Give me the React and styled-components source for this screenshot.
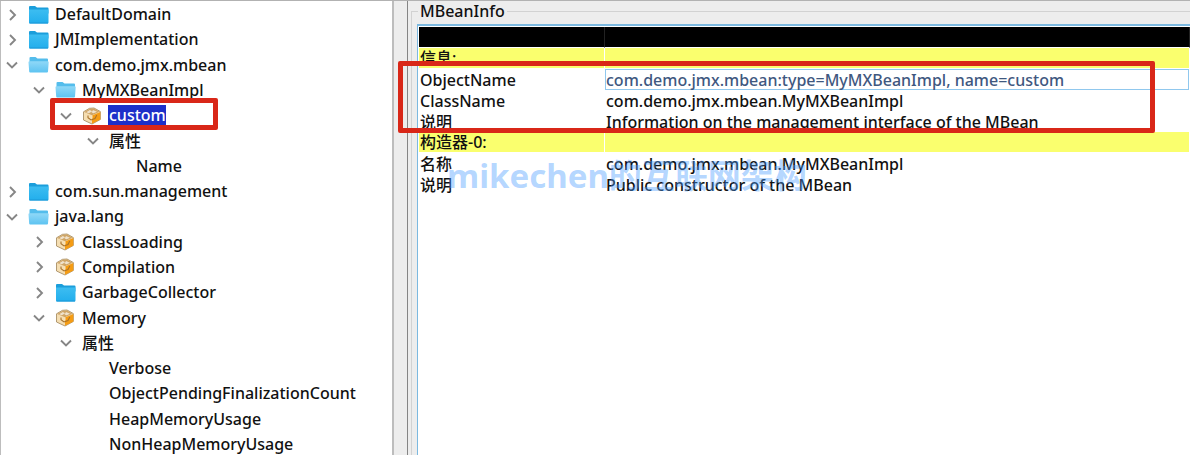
import React from "react";
import styled, { createGlobalStyle } from "styled-components";

const Global = createGlobalStyle`
  * { box-sizing: border-box; }
  body {
    margin: 0;
    background: #fff;
    color: #111;
    font: 500 16px/20px "Noto Sans", "Noto Sans CJK SC", sans-serif;
  }
`;

const Window = styled.main`
  display: flex;
  min-height: calc(100vh - 5px);
  max-height: calc(100vh - 5px);
  overflow: hidden;
  background: #ededed;
  border-top: 1px solid #b2b2b2;
`;

const TreePane = styled.nav`
  flex: 0 0 33%;
  min-width: 394px;
  display: flex;
  border: solid #bdbdbd;
  border-width: 0 2px 0 1px;
  background: #fff;
`;

const Tree = styled.ul`
  flex: 1;
  display: flex;
  flex-direction: column;
  margin: 1px 0 -2px;
  padding: 0;
  list-style: none;
`;

const TreeRow = styled.li`
  position: relative;
  flex: 1 0 25px;
  display: flex;
  align-items: center;
  padding-left: ${(p) => p.$depth * 27}px;
  white-space: nowrap;
`;

const Toggle = styled.button`
  flex: none;
  display: flex;
  justify-content: center;
  width: 22px;
  margin-right: 5px;
  padding: 0;
  border: 0;
  background: none;
`;

const Spacer = styled.span`
  width: 27px;
`;

const IconBox = styled.span`
  display: flex;
  width: 27px;
`;

const Label = styled.span`
  line-height: 21px;
  color: ${(p) => (p.$selected ? "#fff" : "inherit")};
  background: ${(p) => (p.$selected ? "#1d2fc9" : "none")};
  box-shadow: ${(p) => (p.$selected ? "-1px 0 #1d2fc9" : "none")};
`;

const Highlight = styled.span`
  position: absolute;
  border: 5px solid #d92718;
  border-radius: 2px;
  pointer-events: none;
`;

const NodeHighlight = styled(Highlight)`
  left: 49px;
  top: -5px;
  width: 168px;
  height: 32px;
`;

const InfoHighlight = styled(Highlight)`
  left: -20px;
  top: 35px;
  width: 757px;
  height: 72px;
`;

const Splitter = styled.div`
  flex: 0 0 14px;
  border-right: 1px solid #858585;
`;

const InfoPane = styled.section`
  flex: 1;
  display: flex;
  min-width: 0;
  padding: 1px 0 0 3px;
`;

const Group = styled.fieldset`
  flex: 1;
  display: flex;
  min-width: 0;
  margin: 0;
  padding: 4px 0 0 5px;
  border: solid #d2d2d2;
  border-width: 1px 0 0 1px;
`;

const Legend = styled.legend`
  margin-left: 1px;
  padding: 0 2px;
  line-height: 18px;
`;

const TableFrame = styled.div`
  position: relative;
  flex: 1;
  min-width: 0;
  padding: 1px 0 0 1px;
  border: solid #7cb9e0;
  border-width: 2px 0 0 1px;
  background: #fff;
`;

const InfoTable = styled.table`
  width: 100%;
  border-spacing: 0;
  table-layout: fixed;
`;

const KeyColumn = styled.col`
  width: 186px;
`;

const HeadCell = styled.th`
  height: 21px;
  padding: 0;
  background: #000;
  border-right: 1px solid #222;
  border-bottom: 1px solid #fff;
`;

const Cell = styled.td`
  height: 21px;
  padding: 0 1px;
  overflow: hidden;
  white-space: nowrap;
  line-height: 20px;
  background: ${(p) => (p.$section ? "#faff6e" : "none")};
  border-right: 1px solid #fff;
  border-bottom: ${(p) => (p.$section ? "1px solid #fff" : "0")};
  color: ${(p) => (p.$active ? "#3f587f" : "inherit")};
  box-shadow: ${(p) => (p.$active ? "inset 0 0 0 1px #90c8ee" : "none")};
`;

const Watermark = styled.span`
  position: absolute;
  left: 29px;
  top: 130px;
  font: bold 33px/40px "Noto Sans", "Noto Sans CJK SC", sans-serif;
  white-space: nowrap;
  color: rgba(76, 158, 255, 0.42);
  pointer-events: none;
`;

function Chevron({ open }) {
  return (
    <svg width="12" height="12" viewBox="0 0 12 12" fill="none" stroke="#868686" strokeWidth="1.9">
      <path d={open ? "M1 3.5 6 8.5 11 3.5" : "M4 1 9 6 4 11"} />
    </svg>
  );
}

function Folder({ open }) {
  return (
    <svg width="21" height="20" viewBox="0 0 21 20">
      <defs>
        <linearGradient id="closedFolder" x2="0" y2="1">
          <stop stopColor="#3dbdf1" />
          <stop offset="1" stopColor="#22aeec" />
        </linearGradient>
        <linearGradient id="openFolder" x2="0" y2="1">
          <stop stopColor="#90d8f7" />
          <stop offset="1" stopColor="#5dc3f1" />
        </linearGradient>
      </defs>
      {open ? (
        <>
          <path d="M1.500 3q0-1 1-1h5l2 1.500h9.500q1 0 1 1v5H1.500z" fill="#54bdec" />
          <path d="M.5 7.200q0-1 1-1h18.200q1 0 1 1l-.7 9.300q0 1-1 1H2.200q-1 0-1-1z" fill="url(#openFolder)" />
        </>
      ) : (
        <>
          <path d="M1 2q0-1 1-1h5l2 1.500h10.500q1 0 1 1v5H1z" fill="#1b9edb" />
          <path d="M1 4.500h19.500v13q0 1-1 1H2q-1 0-1-1z" fill="url(#closedFolder)" />
          <path d="M1.500 18h18.500" stroke="#1a96d6" />
        </>
      )}
    </svg>
  );
}

function Bean() {
  return (
    <svg width="20" height="18" viewBox="0 0 20 18">
      <path d="M1.500 4.800 7.500 1.300 12 1l6.300 3.500v8L10 17 1.500 13z" fill="#f5deb2" stroke="#a08458" strokeWidth=".8" />
      <path d="M10 8.500 18.300 5v7.500L10 16.800z" fill="#f59c14" />
      <path d="M2.200 5 7.500 2l4.500-.4L17.500 4.800 10 8.200z" fill="#cfa566" />
      <path d="M4.200 5.200 7.800 3l2.400 1.200-3.300 2zM11 3l4 1.800-3.400 1.500-2-.9z" fill="#efe2cc" />
      <path d="M6 8.500v2.200l3 2.300 4-1.500 1.800-3.500" fill="none" stroke="#a8732c" strokeWidth="1.100" />
      <path d="M10 8.500v3" stroke="#fbe7bd" />
    </svg>
  );
}

const nodes = [
  { label: "DefaultDomain", depth: 0, icon: "folder", open: false },
  { label: "JMImplementation", depth: 0, icon: "folder", open: false },
  { label: "com.demo.jmx.mbean", depth: 0, icon: "folder", open: true },
  { label: "MyMXBeanImpl", depth: 1, icon: "folder", open: true },
  { label: "custom", depth: 2, icon: "bean", open: true, selected: true },
  { label: "属性", depth: 3, open: true },
  { label: "Name", depth: 4 },
  { label: "com.sun.management", depth: 0, icon: "folder", open: false },
  { label: "java.lang", depth: 0, icon: "folder", open: true },
  { label: "ClassLoading", depth: 1, icon: "bean", open: false },
  { label: "Compilation", depth: 1, icon: "bean", open: false },
  { label: "GarbageCollector", depth: 1, icon: "folder", open: false },
  { label: "Memory", depth: 1, icon: "bean", open: true },
  { label: "属性", depth: 2, open: true },
  { label: "Verbose", depth: 3 },
  { label: "ObjectPendingFinalizationCount", depth: 3 },
  { label: "HeapMemoryUsage", depth: 3 },
  { label: "NonHeapMemoryUsage", depth: 3 },
];

const rows = [
  { name: "信息:", section: true },
  { name: "ObjectName", value: "com.demo.jmx.mbean:type=MyMXBeanImpl, name=custom", active: true },
  { name: "ClassName", value: "com.demo.jmx.mbean.MyMXBeanImpl" },
  { name: "说明", value: "Information on the management interface of the MBean" },
  { name: "构造器-0:", section: true },
  { name: "名称", value: "com.demo.jmx.mbean.MyMXBeanImpl" },
  { name: "说明", value: "Public constructor of the MBean" },
];

function Node({ label, depth, icon, open, selected }) {
  return (
    <TreeRow $depth={depth}>
      {open === undefined ? (
        <Spacer />
      ) : (
        <Toggle type="button" aria-label={label} aria-expanded={open}>
          <Chevron open={open} />
        </Toggle>
      )}
      {icon && <IconBox>{icon === "folder" ? <Folder open={open} /> : <Bean />}</IconBox>}
      <Label $selected={selected}>{label}</Label>
      {selected && <NodeHighlight />}
    </TreeRow>
  );
}

export default function App() {
  return (
    <>
      <Global />
      <Window>
        <TreePane>
          <Tree>
            {nodes.map((node, i) => (
              <Node key={i} {...node} />
            ))}
          </Tree>
        </TreePane>
        <Splitter />
        <InfoPane>
          <Group>
            <Legend>MBeanInfo</Legend>
            <TableFrame>
              <InfoTable>
                <colgroup>
                  <KeyColumn />
                  <col />
                </colgroup>
                <thead>
                  <tr>
                    <HeadCell />
                    <HeadCell />
                  </tr>
                </thead>
                <tbody>
                  {rows.map((row, i) => (
                    <tr key={i}>
                      <Cell $section={row.section}>{row.name}</Cell>
                      <Cell $section={row.section} $active={row.active}>{row.value}</Cell>
                    </tr>
                  ))}
                </tbody>
              </InfoTable>
              <Watermark>mikechen的互联网架构</Watermark>
              <InfoHighlight />
            </TableFrame>
          </Group>
        </InfoPane>
      </Window>
    </>
  );
}
